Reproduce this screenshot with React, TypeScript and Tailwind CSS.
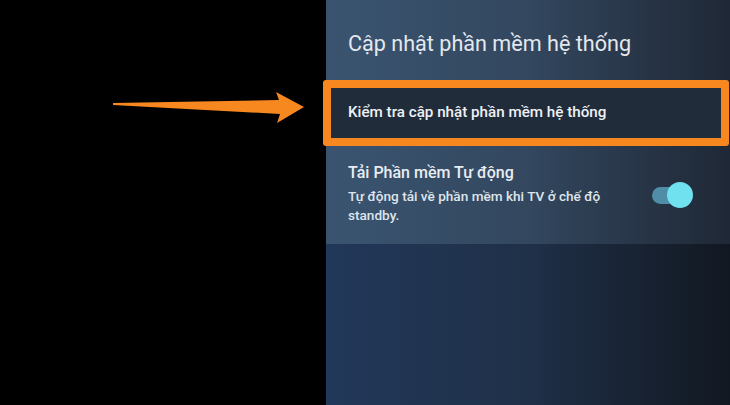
import React from "react";

function Arrow() {
    return (
        <svg width="326" height="405" viewBox="0 0 326 405" className="block">
            <path
                d="M113 103 L279 100 L276 92 L304 107 L277 123 L280 114 L113 105 Z"
                fill="#f7871f"
            />
        </svg>
    );
}

function Toggle() {
    return (
        <div className="relative w-[41px] h-[26px] flex items-center">
            <div className="w-[30px] h-[17px] rounded-full bg-[#4f8ea6]" />
            <div className="absolute right-0 top-0 w-[26px] h-[26px] rounded-full bg-[#70e1ee]" />
        </div>
    );
}

export default function App() {
    return (
        <div
            className="w-[730px] h-[405px] flex bg-black overflow-hidden"
            style={{ fontFamily: "Roboto, 'Noto Sans', sans-serif" }}
        >
            {/* Left black area with arrow */}
            <div className="w-[326px] shrink-0">
                <Arrow />
            </div>

            {/* Settings panel */}
            <div className="flex-1 flex flex-col bg-gradient-to-r from-[#3a5470] via-[#33475f] to-[#1f2836]">
                {/* Header */}
                <div className="h-[80px] flex items-center pl-[22px] pt-[9px]">
                    <h1 className="text-[21.6px] text-[#e3e8ee]">Cập nhật phần mềm hệ thống</h1>
                </div>

                {/* Highlighted item */}
                <div className="-ml-[3px] mr-[1px] h-[66px] border-[8px] border-[#f7871f] rounded-[3px]">
                    <div className="h-full bg-[#212c3a] flex items-center pl-[17px] pb-[2px]">
                        <span className="text-[15.2px] font-medium text-[#eef1f5]">Kiểm tra cập nhật phần mềm hệ thống</span>
                    </div>
                </div>

                {/* Auto download */}
                <div className="h-[98px] flex items-start justify-between pl-[22px] pr-[37px] pt-[16px]">
                    <div className="flex flex-col">
                        <span className="text-[16px] font-medium text-[#e9edf2] leading-[22px]">Tải Phần mềm Tự động</span>
                        <span className="text-[13.6px] font-medium text-[#dfe5ec] leading-[19px] mt-[3px] w-[270px]">
                            Tự động tải về phần mềm khi TV ở chế độ standby.
                        </span>
                    </div>
                    <div className="mt-[20px]">
                        <Toggle />
                    </div>
                </div>

                {/* Lower empty area */}
                <div className="flex-1 bg-gradient-to-r from-[#22385a] via-[#1f3048] to-[#121822]" />
            </div>
        </div>
    );
}
